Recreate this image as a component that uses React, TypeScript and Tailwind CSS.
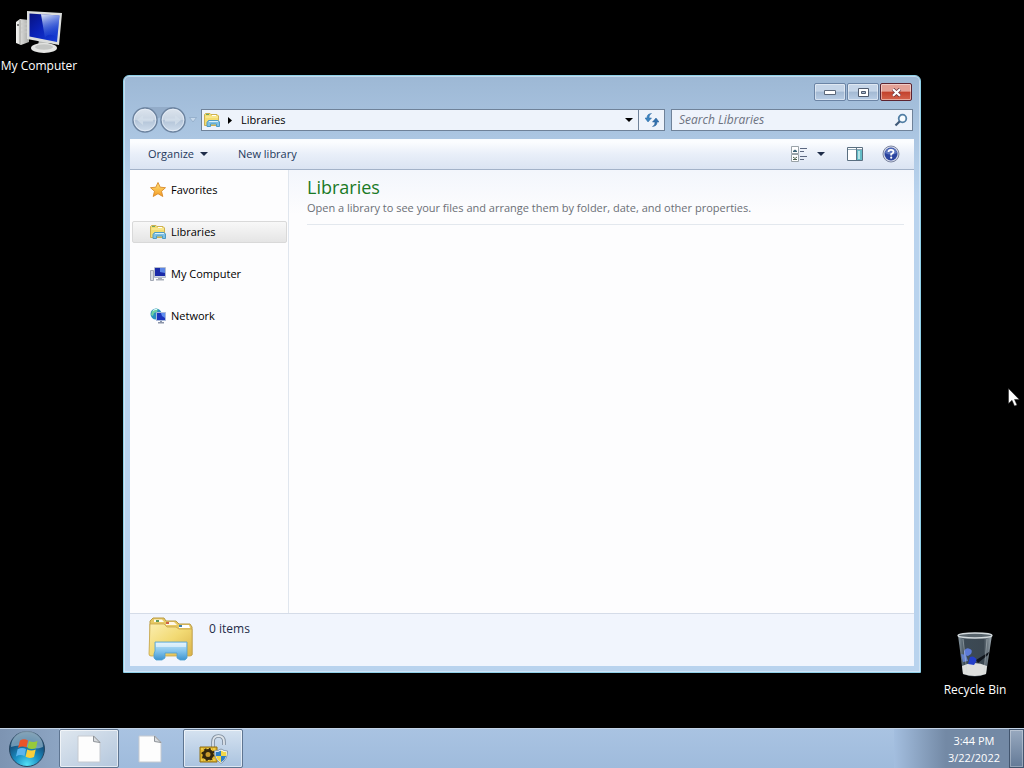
import type { ReactNode } from "react";

const ComputerIcon = ({ className }: { className: string }) => (
  <svg className={className} viewBox="0 0 48 46" aria-hidden="true">
    <defs>
      <linearGradient id="screen" x1="0" y1="0" x2="1" y2="1">
        <stop offset="0" stopColor="#071280" />
        <stop offset="0.45" stopColor="#0a22b8" />
        <stop offset="1" stopColor="#1740d8" />
      </linearGradient>
      <linearGradient id="shine" x1="0" y1="0" x2="0.3" y2="1">
        <stop offset="0" stopColor="#f2f7ff" stopOpacity="0.95" />
        <stop offset="1" stopColor="#3f78ee" stopOpacity="0.1" />
      </linearGradient>
      <linearGradient id="tower" x1="0" y1="0" x2="1" y2="0">
        <stop offset="0" stopColor="#f4f4f2" />
        <stop offset="1" stopColor="#a9aaa8" />
      </linearGradient>
    </defs>
    <path d="M1 12 L5 9 L14 10 V32 L6 35 L1 33Z" fill="url(#tower)" />
    <path d="M5 10 V34" stroke="#8d8e8c" strokeWidth="0.8" />
    <circle cx="3" cy="15" r="1" fill="#555" />
    <path d="M6 14 L12 14 M6 18 L12 18 M6 22 L12 22" stroke="#c9c9c7" />
    <path d="M24 29 L33 31 L34 38 L23 37Z" fill="#b9bbb9" />
    <ellipse cx="29" cy="38" rx="13" ry="5" fill="#e4e5e3" />
    <ellipse cx="29" cy="37" rx="9" ry="2.8" fill="#c4c6c4" />
    <path d="M12 1 L47 3 L44 35 L12 29Z" fill="#dcdedd" />
    <path d="M14.5 3.5 L44.5 5.5 L42 32 L14.5 26.5Z" fill="url(#screen)" />
    <path d="M26 4.3 L44.5 5.5 L42.5 27 Q33 22 30 28Z" fill="url(#shine)" />
  </svg>
);

const LibraryIcon = ({ className }: { className: string }) => (
  <svg className={className} viewBox="0 0 46 46" aria-hidden="true">
    <defs>
      <linearGradient id="folder" x1="0" y1="0" x2="1" y2="1">
        <stop offset="0" stopColor="#fbeeb0" />
        <stop offset="0.5" stopColor="#f2da74" />
        <stop offset="1" stopColor="#dbb348" />
      </linearGradient>
      <linearGradient id="stand" x1="0" y1="0" x2="0" y2="1">
        <stop offset="0" stopColor="#c9e8f8" />
        <stop offset="0.5" stopColor="#84c4ec" />
        <stop offset="1" stopColor="#3d94cf" />
      </linearGradient>
    </defs>
    <path d="M2 39 V5 L5 2 H16 L18 5 H28 L31 8 H42 L44 11 V39Z" fill="#e6c964" stroke="#b99a45" />
    <path d="M6 3.5 H14 L16 6 H6Z" fill="#fffef0" />
    <path d="M18 6 H26 L29 9 H18Z" fill="#fff8e8" />
    <path d="M31 9 H41 L42 12 H31Z" fill="#fff" />
    <path d="M8 4 h3 v2 h-3z" fill="#57955b" />
    <path d="M18 6 h3 v2 h-3z" fill="#d16344" />
    <path d="M31 9 h3 v2 h-3z" fill="#3f81a9" />
    <path d="M2 8 L16 8 L19 11 H28 L31 13 H44 V38 Q44 40 42 40 H3 Q1 40 1 38Z" fill="url(#folder)" stroke="#c6a44a" strokeWidth="0.8" />
    <path d="M7 26 H39 V42 L37 44 H32 L29 42 V37 H17 V42 L14 44 H8 L6 42 V38 L7 35Z" fill="url(#stand)" stroke="#4e9fd0" strokeWidth="0.8" />
    <path d="M8 27 H38 V31 H8Z" fill="#ffffff" opacity="0.5" />
  </svg>
);

const SmallLibraryIcon = () => (
  <svg className="h-4 w-4 shrink-0" viewBox="0 0 16 16" aria-hidden="true">
    <path d="M0.5 13.5 V2.5 L1.5 1.5 H6 L7 2.5 H13 L14.5 4 V13.5Z" fill="#f3dc70" stroke="#cdb052" />
    <path d="M2 2 h3 v1 h-3z" fill="#6aa66a" />
    <path d="M8 3 h4 v1 h-4z" fill="#fff" />
    <path d="M1.5 5 H14" stroke="#fdf0a8" />
    <path d="M4.5 8.5 H14 L15.5 10 V14.5 H12.5 V12 H6.5 V14.5 H3 V10.5Z" fill="#7fc0e4" stroke="#4f9ac4" />
    <path d="M5 9.5 H14" stroke="#d9f1fb" />
  </svg>
);

const SmallComputerIcon = () => (
  <svg className="h-4 w-4 shrink-0" viewBox="0 0 16 16" aria-hidden="true">
    <path d="M0.5 4.5 H3.5 V14.5 H0.5Z" fill="#d8dbe2" stroke="#a3a9b5" />
    <path d="M4.5 1.5 H15.5 V11.5 H4.5Z" fill="#cfd6e4" stroke="#b4bccd" />
    <path d="M5 2 H15 V10 H5Z" fill="#1a2aa8" />
    <path d="M10 2 H15 V7 L10 6Z" fill="#5a85e6" />
    <path d="M8 12 H12 V13 H14 V14.5 H6 V13 H8Z" fill="#a9afba" />
  </svg>
);

const NetworkIcon = () => (
  <svg className="h-4 w-4 shrink-0" viewBox="0 0 16 16" aria-hidden="true">
    <circle cx="6" cy="6" r="5.5" fill="#2a8fc0" />
    <path d="M2 3 Q5 0 8 1 L7 4 L4 5 L3 8 L1 7Z" fill="#6fd0a0" />
    <path d="M3 2.5 Q5 1 7 1.5" stroke="#d9f6ff" fill="none" />
    <path d="M6.500 4.500 H15.500 V12.500 H6.500Z" fill="#1c34bd" stroke="#a9b9dc" />
    <path d="M11 5 H15 V10 L12 8Z" fill="#5f8df0" />
    <path d="M10 13 H12 V14 H14 V15.500 H8 V14 H10Z" fill="#8b94a8" />
  </svg>
);

const StarIcon = () => (
  <svg className="h-4 w-4 shrink-0" viewBox="0 0 16 16" aria-hidden="true">
    <defs>
      <linearGradient id="star" x1="0" y1="0" x2="0" y2="1">
        <stop offset="0" stopColor="#ffe47a" />
        <stop offset="1" stopColor="#f59a23" />
      </linearGradient>
    </defs>
    <path d="M8 0.5 L10.2 5.2 L15.5 5.700 L11.500 9.300 L12.800 14.500 L8 11.700 L3.200 14.500 L4.500 9.300 L0.500 5.700 L5.800 5.200Z" fill="url(#star)" stroke="#d88a2a" strokeWidth="0.9" strokeLinejoin="round" />
  </svg>
);

const Caret = ({ className = "text-[#1e2c49]" }: { className?: string }) => (
  <svg className={`h-1 w-2 ${className}`} viewBox="0 0 8 4" fill="currentColor" aria-hidden="true">
    <path d="M0 0 H8 L4 4Z" />
  </svg>
);

const NavArrows = () => (
  <svg className="h-[28px] w-[56px]" viewBox="0 0 56 28" aria-hidden="true">
    <defs>
      <linearGradient id="orb" x1="0" y1="0" x2="0" y2="1">
        <stop offset="0" stopColor="#dde5ee" />
        <stop offset="0.48" stopColor="#c9d5e3" />
        <stop offset="0.52" stopColor="#b3c4d8" />
        <stop offset="1" stopColor="#d0deed" />
      </linearGradient>
    </defs>
    <path d="M12 1 H44 V12 Q28 7 20 18Z" fill="#8ca4c1" opacity="0.7" />
    <circle cx="14" cy="14" r="12" fill="url(#orb)" stroke="#6c839f" strokeWidth="1.500" />
    <circle cx="42" cy="14" r="12" fill="url(#orb)" stroke="#6c839f" strokeWidth="1.500" />
    <circle cx="14" cy="14" r="10.800" fill="none" stroke="#e6eef7" strokeWidth="0.800" />
    <circle cx="42" cy="14" r="10.800" fill="none" stroke="#e6eef7" strokeWidth="0.800" />
    <path d="M6 14 L12 9 V12.500 H22 V15.500 H12 V19Z" fill="#d3deea" opacity="0.8" />
    <path d="M50 14 L44 9 V12.500 H34 V15.500 H44 V19Z" fill="#d3deea" opacity="0.8" />
  </svg>
);

const RecycleBinIcon = () => (
  <svg className="h-[46px] w-[38px]" viewBox="0 0 38 46" aria-hidden="true">
    <defs>
      <linearGradient id="glass" x1="0" y1="0" x2="1" y2="0">
        <stop offset="0" stopColor="#8b9aa3" />
        <stop offset="0.2" stopColor="#3c4a55" />
        <stop offset="0.75" stopColor="#3b4751" />
        <stop offset="1" stopColor="#a3afb6" />
      </linearGradient>
    </defs>
    <path d="M2 3 L7 42 Q19 47 30 42 L36 3Z" fill="url(#glass)" />
    <path d="M6 34 Q18 28 31 34 L30 42 Q19 46 7 42Z" fill="#dedfdd" />
    <path d="M8 19 Q10 15 14 17 Q17 18 15 22 L12 24 L8 23Z" fill="#5d7bd8" />
    <path d="M5 22 L10 23 L12 29 L7 30Z" fill="#6381cc" />
    <path d="M14 25 Q18 23 21 28 L18 33 L12 32Z" fill="#243fc9" />
    <path d="M20 28 L33 20 L32 23 L22 31Z" fill="#10151c" />
    <path d="M7 7 L11 41 M31 7 L28 41" stroke="#cfd7da" strokeWidth="0.7" opacity="0.6" />
    <ellipse cx="19" cy="3.5" rx="17" ry="2.5" fill="#59656d" stroke="#d3dadd" strokeWidth="1.3" />
  </svg>
);

const StartOrb = () => (
  <svg className="h-[38px] w-[38px]" viewBox="0 0 38 38" aria-hidden="true">
    <defs>
      <radialGradient id="orbGlow" cx="0.5" cy="0.95" r="0.9">
        <stop offset="0" stopColor="#52e0f5" />
        <stop offset="0.4" stopColor="#1a8fc4" />
        <stop offset="0.75" stopColor="#15527f" />
        <stop offset="1" stopColor="#3c6888" />
      </radialGradient>
    </defs>
    <circle cx="19" cy="19" r="17.5" fill="url(#orbGlow)" stroke="#27455f" />
    <path d="M3 17 A16 16 0 0 1 35 17 Q27 20 19 17 Q11 14 3 17Z" fill="#d7e9f2" opacity="0.45" />
    <path d="M12 10.5 Q16 8 20 10.5 L18.5 17.5 Q14.5 15.5 10 18Z" fill="#ea5428" />
    <path d="M21 11 Q25 13 29.5 11 L28 18 Q24 20 19.5 18Z" fill="#97c93b" />
    <path d="M9.6 19.3 Q14 17 18 19 L16.5 26 Q12 24 8 26.5Z" fill="#5cb5ee" />
    <path d="M19.2 19.6 Q23.5 21.5 27.7 19.5 L26 27 Q21.5 29 17.6 26.8Z" fill="#fbcf3b" />
  </svg>
);

const PageIcon = () => (
  <svg className="h-[28px] w-6" viewBox="0 0 24 28" aria-hidden="true">
    <path d="M1 1 H17 L23 7 V27 H1Z" fill="#fdfdfd" stroke="#c6cad0" />
    <path d="M16.500 1 V6.500 L23 7.500Z" fill="#d9dcdf" stroke="#8e9399" />
  </svg>
);

const LockIcon = () => (
  <svg className="h-8 w-8" viewBox="0 0 32 32" aria-hidden="true">
    <path d="M16 14 V9 Q16 3 21.500 3 Q27 3 27 9 V12" fill="none" stroke="#7d8b9b" strokeWidth="3.600" />
    <path d="M16 14 V9 Q16 3 21.500 3 Q27 3 27 9 V12" fill="none" stroke="#dce3ea" strokeWidth="1.800" />
    <path d="M3 14 H20 V29 H3Z" fill="#e2b62a" stroke="#8f6f15" />
    <path d="M4 16 H19 M4 27 H19" stroke="#f7e170" strokeDasharray="2 1" />
    <circle cx="11" cy="21.500" r="4" fill="#c99a2b" stroke="#33270e" strokeWidth="3" />
    <circle cx="11" cy="21.500" r="5.700" fill="none" stroke="#33270e" strokeWidth="1.800" strokeDasharray="2 2.500" />
    <path d="M24 16 Q27 18 30.500 18 Q31 26 24 30.500 Q17 26 17.500 18 Q21 18 24 16Z" fill="#fff" stroke="#8898a8" />
    <path d="M24 17.500 V23 H18.800 Q18.500 21 18.700 19 Q21.500 19 24 17.500Z M24 23 H29.200 Q28 27 24 29.200Z" fill="#2d7dc5" />
    <path d="M24 17.500 V23 H29.200 Q29.500 21 29.300 19 Q26.500 19 24 17.500Z M24 23 H18.800 Q20 27 24 29.200Z" fill="#f3d848" />
  </svg>
);

const CaptionButton = ({ label, close, children }: { label: string; close?: boolean; children: ReactNode }) => (
  <button
    aria-label={label}
    className={`flex h-[18px] w-8 items-center justify-center rounded-xs border shadow-[inset_0_0_0_1px_rgba(255,255,255,0.45)] ${
      close
        ? "border-[#5c2330] bg-linear-to-b from-[#e3a196] from-45% via-[#c2402b] via-50% to-[#d4634c]"
        : "border-[#6b84a5] bg-linear-to-b from-[#c5d5e8] from-45% via-[#a3b9d3] via-50% to-[#b9cee6]"
    }`}
  >
    {children}
  </button>
);

const places = [
  { name: "Favorites", icon: <StarIcon /> },
  { name: "Libraries", icon: <SmallLibraryIcon />, active: true },
  { name: "My Computer", icon: <SmallComputerIcon /> },
  { name: "Network", icon: <NetworkIcon /> },
];

const Toolbar = () => (
  <div className="flex h-[31px] items-center border-b border-[#a3b2c8] bg-linear-to-b from-[#fbfdff] from-10% via-[#e9eff9] via-50% to-[#dbe4f2] pl-[18px] pr-[14px] text-[11px] text-[#1e395b]">
    <button className="flex items-center gap-[6px]">
      Organize
      <Caret />
    </button>
    <button className="ml-[30px]">New library</button>
    <button aria-label="Change your view" className="ml-auto">
      <svg className="h-4 w-[18px]" viewBox="0 0 18 16" fill="none" aria-hidden="true">
        <path d="M1.500 0.500 H8.500 V7.500 H1.500Z M1.500 8.500 H8.500 V15.500 H1.500Z" fill="#fff" stroke="#9aa3a8" />
        <path d="M3 5 L5 3.500 L7 5 V6 H3Z" fill="#3b6376" />
        <path d="M3 11 L5 12.500 L7 11 M3 13.500 H7" stroke="#4d5f4e" />
        <path d="M10 2.500 H17 M10 5.500 H14 M10 10.500 H17 M10 13.500 H14" stroke="#5c6880" />
      </svg>
    </button>
    <button aria-label="More options" className="ml-2 px-px">
      <Caret />
    </button>
    <button aria-label="Show the preview pane" className="ml-5">
      <svg className="h-4 w-[18px]" viewBox="0 0 18 16" aria-hidden="true">
        <path d="M1.500 1.500 H16.500 V14.500 H1.500Z" fill="#fff" stroke="#5a6f80" />
        <path d="M2 3.500 H16" stroke="#8ea5b4" />
        <path d="M10.500 2 V14" stroke="#5a7586" />
        <path d="M11 4 H16 V14 H11Z" fill="#63bcc6" />
        <path d="M12 5 H14 V13 H12Z" fill="#b5e4e6" />
      </svg>
    </button>
    <button aria-label="Get help" className="ml-[18px]">
      <svg className="h-[18px] w-[18px]" viewBox="0 0 18 18" aria-hidden="true">
        <circle cx="9" cy="9" r="8" fill="#d5dbe8" stroke="#7d86a2" />
        <circle cx="9" cy="9" r="6.500" fill="#2b449f" />
        <path d="M3 8 A6.200 6.200 0 0 1 15 8 Q9 11 3 8Z" fill="#7f97d6" opacity="0.6" />
        <path d="M6.500 7 Q6.500 4.800 9 4.800 Q11.500 4.800 11.500 6.800 Q11.500 8.200 9.200 9.200 V10.600" fill="none" stroke="#fff" strokeWidth="1.800" />
        <circle cx="9.200" cy="12.700" r="1.100" fill="#fff" />
      </svg>
    </button>
  </div>
);

const AddressRow = () => (
  <div className="flex h-[22px] items-center px-px">
    <button aria-label="Back and forward">
      <NavArrows />
    </button>
    <button aria-label="Recent pages" className="mx-[2px]">
      <svg className="h-[6px] w-2" viewBox="0 0 8 6" aria-hidden="true">
        <path d="M0.500 0.500 H7.500 L4 5Z" fill="#c7d9ec" stroke="#8fa9c7" strokeWidth="0.800" />
      </svg>
    </button>
    <div className="ml-[2px] flex h-full flex-1 items-center border border-[#6f8299] bg-[#eef3fb]">
      <span className="ml-[2px] flex">
        <SmallLibraryIcon />
      </span>
      <svg className="ml-2 h-[7px] w-1" viewBox="0 0 4 7" aria-hidden="true">
        <path d="M0 0 L4 3.500 L0 7Z" />
      </svg>
      <button className="ml-[9px] text-[11px]">Libraries</button>
      <button aria-label="Previous locations" className="ml-auto mr-[5px]">
        <Caret className="text-black" />
      </button>
      <button aria-label="Refresh" className="flex h-full w-[26px] items-center justify-center border-l border-[#6f8299]">
        <svg className="h-[14px] w-[14px]" viewBox="0 0 14 14" aria-hidden="true">
          <path d="M6.500 0.500 Q3.800 1.500 4 5 H6.500 L3 9 L0 5 H2 Q1.800 0.800 6.500 0.500Z" fill="#3d84c0" stroke="#2767a2" strokeWidth="0.500" />
          <path d="M7.500 13.500 Q10.200 12.500 10 9 H7.500 L11 5 L14 9 H12 Q12.200 13.200 7.500 13.500Z" fill="#3271ae" stroke="#205b94" strokeWidth="0.500" />
        </svg>
      </button>
    </div>
    <div className="ml-[6px] flex h-full w-[242px] items-center border border-[#6f8299] bg-[#eef3fb] pl-[7px] pr-1">
      <input
        aria-label="Search Libraries"
        placeholder="Search Libraries"
        className="min-w-0 flex-1 bg-transparent outline-none placeholder:italic placeholder:text-[#6d7280]"
      />
      <button aria-label="Search">
        <svg className="h-[14px] w-[14px]" viewBox="0 0 14 14" fill="none" aria-hidden="true">
          <circle cx="8.500" cy="5.500" r="3.800" fill="#f8fcff" stroke="#527fa5" strokeWidth="1.800" />
          <path d="M5.800 8.200 L1.500 12.500" stroke="#405a79" strokeWidth="2.200" />
        </svg>
      </button>
    </div>
  </div>
);

const ExplorerWindow = () => (
  <main className="absolute top-[75px] right-[103px] bottom-[95px] left-[123px] flex flex-col rounded-t-md border border-[#8fd0e8] bg-linear-to-b from-[#9db8d5] to-[#b9d3ee] to-20% px-[6px] pb-[6px] shadow-[inset_0_0_0_1px_rgba(224,240,252,0.6)]">
    <header className="pb-2">
      <div className="flex h-[33px] justify-end gap-px pt-[7px] pr-[2px]">
        <CaptionButton label="Minimize">
          <svg className="h-[5px] w-3" viewBox="0 0 12 5" aria-hidden="true">
            <path d="M0.500 0.500 H11.500 V4.500 H0.500Z" fill="#fff" stroke="#5b6779" />
          </svg>
        </CaptionButton>
        <CaptionButton label="Maximize">
          <svg className="h-[9px] w-[11px]" viewBox="0 0 11 9" aria-hidden="true">
            <path d="M0.500 0.500 H10.500 V8.500 H0.500Z" fill="#fff" stroke="#4f5b6e" />
            <path d="M3.500 3.500 H7.500 V5.500 H3.500Z" fill="#a9bbd1" stroke="#4f5b6e" />
          </svg>
        </CaptionButton>
        <CaptionButton label="Close" close>
          <svg className="h-[9px] w-[11px]" viewBox="0 0 11 9" aria-hidden="true">
            <path d="M2 1.200 L9 7.800 M9 1.200 L2 7.800" stroke="#6b3640" strokeWidth="3.600" />
            <path d="M2 1.200 L9 7.800 M9 1.200 L2 7.800" stroke="#fff" strokeWidth="2.200" />
          </svg>
        </CaptionButton>
      </div>
      <AddressRow />
    </header>

    <Toolbar />

    <div className="flex min-h-0 flex-1 bg-[#fdfdfe]">
      <nav className="w-[159px] shrink-0 border-r border-[#e0e6ee] pt-[9px] pr-px pl-[2px] text-[11px]">
        <ul className="flex flex-col gap-5">
          {places.map((place) => (
            <li key={place.name}>
              <a
                href="#"
                className={`flex h-[22px] items-center gap-[5px] rounded-xs border pl-[17px] ${
                  place.active ? "border-[#d9d9d9] bg-linear-to-b from-[#f8f8f8] to-[#e5e5e5]" : "border-transparent"
                }`}
              >
                {place.icon}
                {place.name}
              </a>
            </li>
          ))}
        </ul>
      </nav>
      <section className="flex-1 bg-linear-to-b from-[#f3f6fc] to-[#fdfdfe] to-10% pt-1 pr-[10px] pl-[18px]">
        <h1 className="text-[18px] leading-[26px] text-[#1a7a26]">Libraries</h1>
        <p className="text-[11px] text-[#6b6f76]">
          Open a library to see your files and arrange them by folder, date, and other properties.
        </p>
        <hr className="mt-2 border-[#e3e8ee]" />
      </section>
    </div>

    <footer className="flex h-[53px] border-t border-[#d5dce8] bg-[#f1f5fd] pl-[18px] text-[#1e2c49]">
      <LibraryIcon className="mt-[2px] h-[46px] w-[46px]" />
      <span className="mt-[7px] ml-[15px]">0 items</span>
    </footer>
  </main>
);

const Taskbar = () => (
  <footer className="flex h-10 border-t border-[#c3d3e6] bg-linear-to-b from-[#a9c3e2] to-[#9fbbdc]">
    <button aria-label="Start" className="flex w-[59px] items-center bg-linear-to-r from-[#7d94b2] to-[#8da5c3] pl-2">
      <StartOrb />
    </button>
    <button
      aria-label="Document"
      className="flex w-[60px] items-center justify-center rounded-xs border border-[#5e7591] bg-linear-to-br from-[#dfe7ef] to-[#b4c7dd] shadow-[inset_0_0_0_1px_rgba(255,255,255,0.6)]"
    >
      <PageIcon />
    </button>
    <button aria-label="Document" className="ml-px flex w-[60px] items-center justify-center">
      <PageIcon />
    </button>
    <button
      aria-label="Security settings"
      className="ml-[3px] flex w-[60px] items-center justify-center rounded-xs border border-[#5e7591] bg-linear-to-b from-[#d5e2f0] to-[#aac3df] shadow-[inset_0_0_0_1px_rgba(255,255,255,0.6)]"
    >
      <LockIcon />
    </button>
    <div className="ml-auto flex w-[130px] justify-end bg-linear-to-r from-[#a3bedf] to-[#7389a5] to-40%">
      <time className="mr-[9px] pt-[3px] text-center text-[11px] leading-[17px] text-white">
        3:44 PM
        <br />
        3/22/2022
      </time>
      <button
        aria-label="Show desktop"
        className="w-[15px] border border-[#42556e] bg-linear-to-b from-[#98a9bf] to-[#647a97] shadow-[inset_0_0_0_1px_rgba(255,255,255,0.3)]"
      />
    </div>
  </footer>
);

export default function App() {
  return (
    <div className="relative flex h-screen flex-col overflow-hidden bg-black font-['Open_Sans','Noto_Sans',sans-serif] text-[12px] leading-4 text-black">
      <div className="flex flex-1 flex-col items-start justify-between">
        <button className="mt-[10px] flex w-[78px] flex-col items-center gap-[2px] text-white">
          <ComputerIcon className="h-[46px] w-[48px]" />
          My Computer
        </button>
        <button className="mr-[10px] mb-[30px] flex w-[78px] flex-col items-center gap-1 self-end text-white">
          <RecycleBinIcon />
          Recycle Bin
        </button>
      </div>
      <ExplorerWindow />
      <Taskbar />
      <svg className="pointer-events-none absolute top-[388px] right-[4px] h-[19px] w-3" viewBox="0 0 12 19" aria-hidden="true">
        <path d="M0.500 0.500 V15.500 L4 12.300 L6.500 18 L9 17 L6.500 11.500 H11.300Z" fill="#fff" stroke="#222" strokeWidth="0.500" />
      </svg>
    </div>
  );
}
